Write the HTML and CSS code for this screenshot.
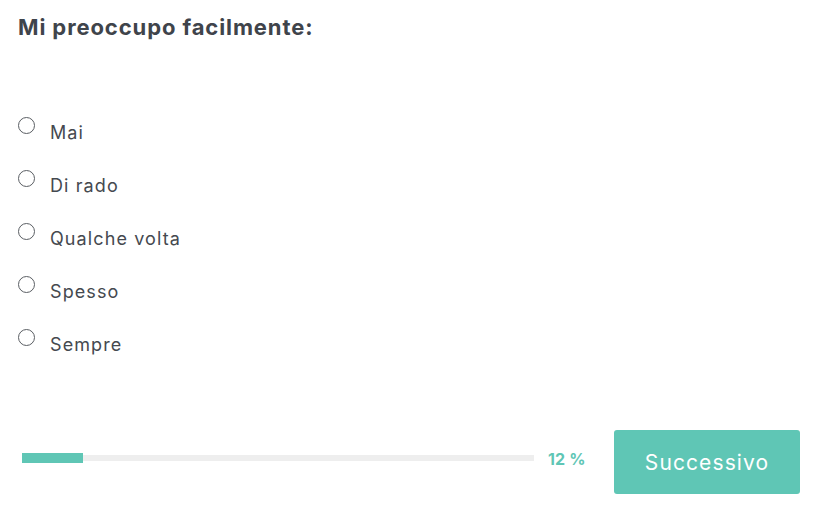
FILE: index.html
```html
<!DOCTYPE html>
<html lang="it">
<head>
<meta charset="utf-8">
<link rel="stylesheet" href="styles.css">
</head>
<body>
<div class="page">
  <h1 class="title">Mi preoccupo facilmente:</h1>
  <ul class="options">
    <li class="option"><span class="radio"></span><span class="label">Mai</span></li>
    <li class="option"><span class="radio"></span><span class="label">Di rado</span></li>
    <li class="option"><span class="radio"></span><span class="label">Qualche volta</span></li>
    <li class="option"><span class="radio"></span><span class="label">Spesso</span></li>
    <li class="option"><span class="radio"></span><span class="label">Sempre</span></li>
  </ul>
  <div class="footer">
    <div class="progress"><div class="progress-fill" style="width:61px"></div></div>
    <span class="percent">12 %</span>
    <button class="next">Successivo</button>
  </div>
</div>
</body>
</html>
```
FILE: styles.css
```css
* { box-sizing: border-box; }
html, body { margin: 0; padding: 0; background: #fff; }
body { font-family: Inter, "Noto Sans", sans-serif; color: #464a50; }
.page { padding: 13px 16px 0 18px; width: 816px; height: 510px; }
.title { margin: 0; font-size: 22px; font-weight: 700; color: #3f444b; line-height: 28px; letter-spacing: 0.9px; }
.options { list-style: none; margin: 76px 0 0 0; padding: 0; display: flex; flex-direction: column; gap: 29px; }
.option { display: flex; align-items: flex-start; height: 24px; }
.radio { width: 17px; height: 17px; border: 1.3px solid #5a5e63; border-radius: 50%; flex: none; }
.label { margin-left: 15px; margin-top: 5px; font-size: 18px; line-height: 22px; color: #45494f; letter-spacing: 1.1px; }
.footer { display: flex; align-items: center; margin-top: 77px; padding-left: 4px; height: 64px; }
.progress { width: 512px; height: 6px; background: #eeeeee; position: relative; margin-bottom: 8px; }
.progress-fill { position: absolute; left: 0; top: -2px; height: 10px; background: #5fc6b5; }
.percent { margin-left: 14px; margin-bottom: 6px; font-size: 16px; font-weight: 700; color: #5fc6b5; width: 66px; letter-spacing: 0.2px; }
.next { width: 186px; height: 64px; background: #5fc6b5; border: none; border-radius: 3px; color: #fff; font-family: Inter, "Noto Sans", sans-serif; font-size: 21px; font-weight: 400; letter-spacing: 1.1px; }
```
